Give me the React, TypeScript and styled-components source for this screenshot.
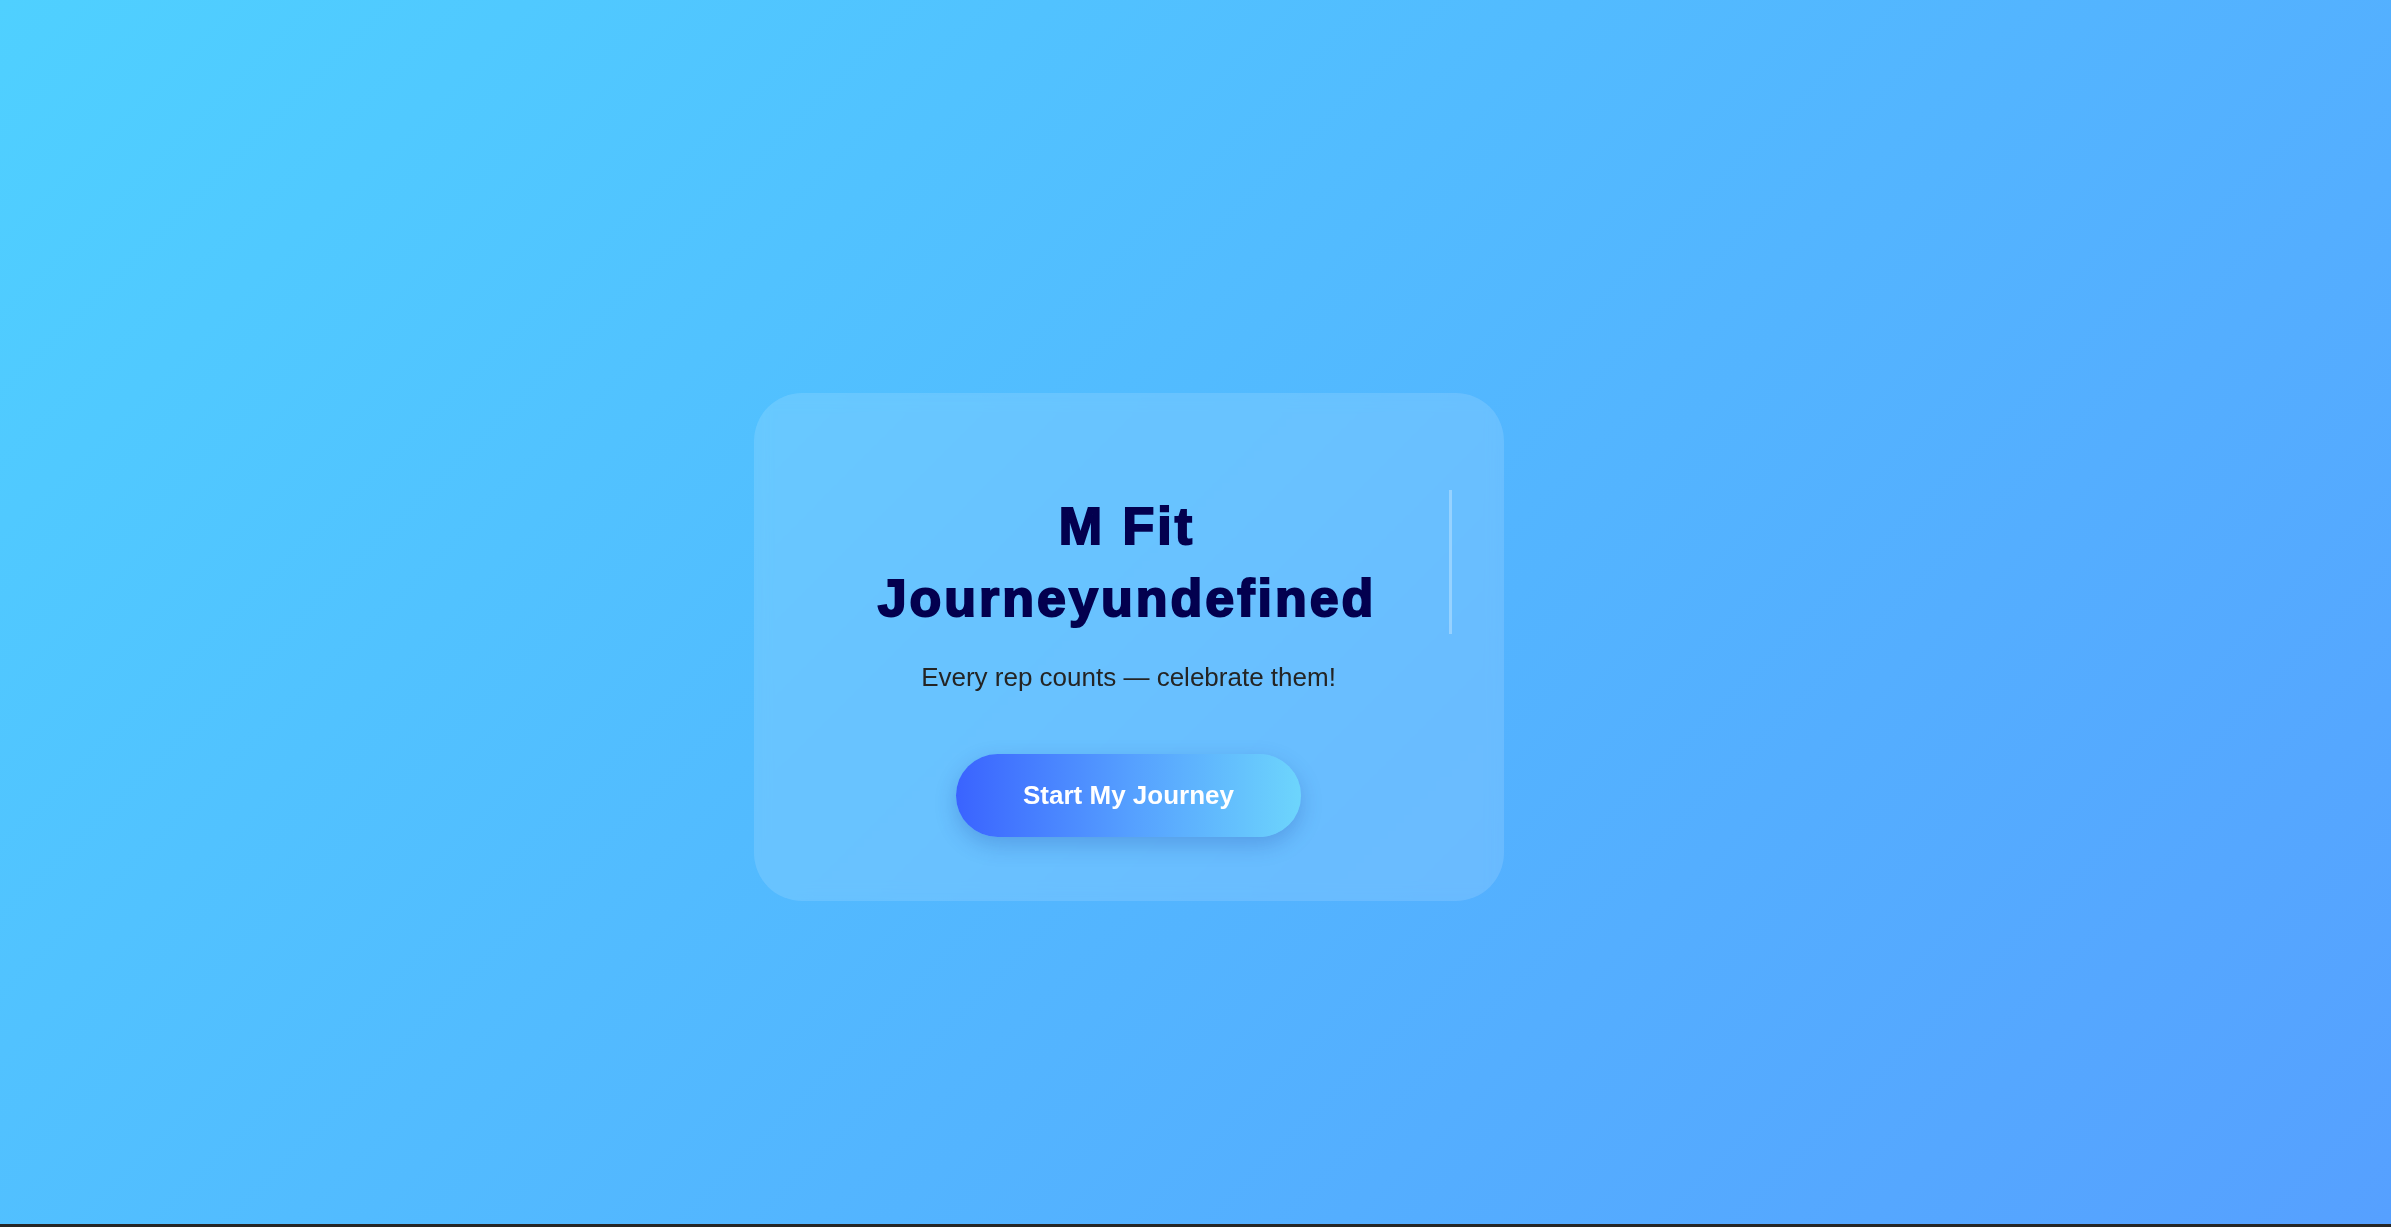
import styled, { createGlobalStyle } from 'styled-components';

const GlobalStyle = createGlobalStyle`
  html, body {
    margin: 0;
    padding: 0;
    background: #262626;
  }
  * {
    box-sizing: border-box;
  }
`;

const Page = styled.main`
  height: calc(100vh - 3px);
  display: flex;
  align-items: center;
  justify-content: center;
  padding: 70px 134px 0 0;
  background: linear-gradient(135deg, #4fd0ff 0%, #56a0ff 100%);
  font-family: 'Liberation Sans', Arial, sans-serif;
`;

const Card = styled.section`
  width: 750px;
  padding: 64px 52px;
  border-radius: 48px;
  background: rgba(255, 255, 255, 0.13);
  backdrop-filter: blur(8px);
  display: flex;
  flex-direction: column;
  align-items: center;
  text-align: center;
`;

// typewriter heading, the cursor is the right border
const Title = styled.h1`
  align-self: stretch;
  margin: 33px 0 24px;
  font-size: 52px;
  line-height: 72px;
  font-weight: 700;
  letter-spacing: 3px;
  color: #03004f;
  -webkit-text-stroke: 2px #03004f;
  border-right: 3px solid rgba(255, 255, 255, 0.3);
`;

const Subtitle = styled.p`
  margin: 0 0 57px;
  font-size: 26px;
  line-height: 39px;
  color: #242424;
`;

const StartButton = styled.button`
  border: none;
  border-radius: 50px;
  padding: 26px 67px;
  font-family: inherit;
  font-size: 26px;
  line-height: 31px;
  font-weight: 700;
  color: #fff;
  cursor: pointer;
  background: linear-gradient(90deg, #3a63ff 0%, #559fff 50%, #6dd5fc 100%);
  box-shadow: 0 8px 22px rgba(20, 40, 140, 0.22);
`;

export default function App() {
  const text = 'M Fit Journey' + undefined;

  return (
    <>
      <GlobalStyle />
      <Page>
        <Card>
          <Title>{text}</Title>
          <Subtitle>Every rep counts — celebrate them!</Subtitle>
          <StartButton>Start My Journey</StartButton>
        </Card>
      </Page>
    </>
  );
}
